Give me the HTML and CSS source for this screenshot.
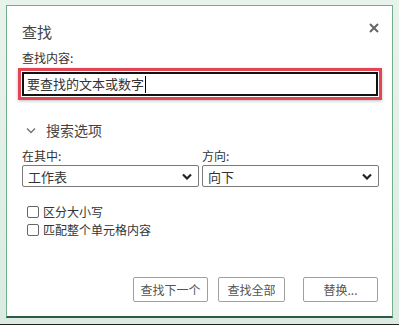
FILE: index.html
```html
<!DOCTYPE html>
<html lang="zh-CN">
<head>
    <meta charset="UTF-8">
    <title>查找</title>
    <link rel="stylesheet" href="styles.css">
</head>
<body>
    <div class="frame">
        <div class="dialog">
            <div class="title-row">
                <h1>查找</h1>
                <svg class="close-btn" width="10" height="10" viewBox="0 0 10 10"><path d="M1 1 L9 9 M9 1 L1 9" stroke="#666" stroke-width="2"/></svg>
            </div>

            <label class="field-label" for="find-what">查找内容:</label>
            <div class="highlight">
                <div class="find-input" id="find-what">要查找的文本或数字<span class="caret"></span></div>
            </div>

            <div class="options-toggle">
                <svg width="10" height="7" viewBox="0 0 10 7"><path d="M1 1.5 L5 5.5 L9 1.5" fill="none" stroke="#777" stroke-width="1.5"/></svg>
                <span>搜索选项</span>
            </div>

            <div class="selects">
                <div class="select-group">
                    <label class="field-label">在其中:</label>
                    <div class="select-box">
                        <span>工作表</span>
                        <svg width="10" height="7" viewBox="0 0 10 7"><path d="M1 1.5 L5 5.5 L9 1.5" fill="none" stroke="#222" stroke-width="2.2"/></svg>
                    </div>
                </div>
                <div class="select-group">
                    <label class="field-label">方向:</label>
                    <div class="select-box">
                        <span>向下</span>
                        <svg width="10" height="7" viewBox="0 0 10 7"><path d="M1 1.5 L5 5.5 L9 1.5" fill="none" stroke="#222" stroke-width="2.2"/></svg>
                    </div>
                </div>
            </div>

            <div class="checks">
                <div class="check"><span class="box"></span>区分大小写</div>
                <div class="check"><span class="box"></span>匹配整个单元格内容</div>
            </div>

            <div class="buttons">
                <button type="button">查找下一个</button>
                <button type="button" class="narrow">查找全部</button>
                <button type="button" class="last">替换...</button>
            </div>
        </div>
    </div>
</body>
</html>
```

FILE: styles.css
```css
body {
    margin: 0;
    font-family: "Noto Sans CJK SC", "Noto Sans", sans-serif;
    color: #333;
    background: #dfeee5;
}

.frame {
    width: 399px;
    height: 325px;
    box-sizing: border-box;
    padding: 5px 6px 6px 6px;
    background: linear-gradient(#e8f3ec, #dcebe2);
    border-bottom: 1px solid #222;
}

.dialog {
    height: 100%;
    box-sizing: border-box;
    background: #fff;
    border: 1px solid #6fb08a;
    border-bottom: 2px solid #2f5a43;
    padding: 10px 13px 0 15px;
    display: flex;
    flex-direction: column;
}

.title-row {
    display: flex;
    justify-content: space-between;
    align-items: center;
    height: 30px;
}

.title-row h1 {
    margin: 0;
    font-size: 15px;
    font-weight: normal;
    color: #444;
}

.close-btn {
    margin-top: -6px;
}

.field-label {
    font-size: 12px;
    color: #333;
    line-height: 16px;
}

.title-row + .field-label { margin-top: 4px; }

.highlight {
    margin: 2px -3px 0 -4px;
    border: 3px solid #e34652;
    padding: 1px;
    box-shadow: 0 1px 3px rgba(0, 0, 0, 0.25);
}

.find-input {
    border: 2px solid #111;
    height: 20px;
    padding-left: 3px;
    font-size: 13px;
    line-height: 20px;
    color: #333;
    display: flex;
    align-items: center;
}

.caret {
    width: 1px;
    height: 17px;
    background: #000;
    margin-left: 1px;
}

.options-toggle {
    display: flex;
    align-items: center;
    gap: 10px;
    height: 20px;
    margin: 20px 0 0 4px;
    font-size: 14px;
    color: #444;
}

.selects {
    display: flex;
    gap: 3px;
    margin-top: 8px;
}

.select-group {
    flex: 1;
    display: flex;
    flex-direction: column;
}

.select-box {
    margin-top: 1px;
    height: 22px;
    box-sizing: border-box;
    border: 1px solid #7a7a7a;
    border-radius: 2px;
    display: flex;
    justify-content: space-between;
    align-items: center;
    padding: 0 6px 0 5px;
    font-size: 13px;
    color: #333;
}

.checks {
    margin: 17px 0 0 5px;
    display: flex;
    flex-direction: column;
    gap: 2px;
}

.check {
    display: flex;
    align-items: center;
    gap: 4px;
    font-size: 12px;
    color: #333;
    line-height: 16px;
}

.check .box {
    width: 10px;
    height: 10px;
    border: 1px solid #666;
    border-radius: 2px;
}

.buttons {
    margin-top: auto;
    margin-bottom: 14px;
    margin-right: 1px;
    display: flex;
    justify-content: flex-end;
    gap: 10px;
}

button {
    font-family: inherit;
    font-size: 12px;
    color: #555;
    background: #fff;
    border: 1px solid #a0a0a0;
    border-radius: 2px;
    height: 25px;
    width: 75px;
    padding: 0;
}

button.narrow { width: 67px; }
button.last { margin-left: 8px; }
```
